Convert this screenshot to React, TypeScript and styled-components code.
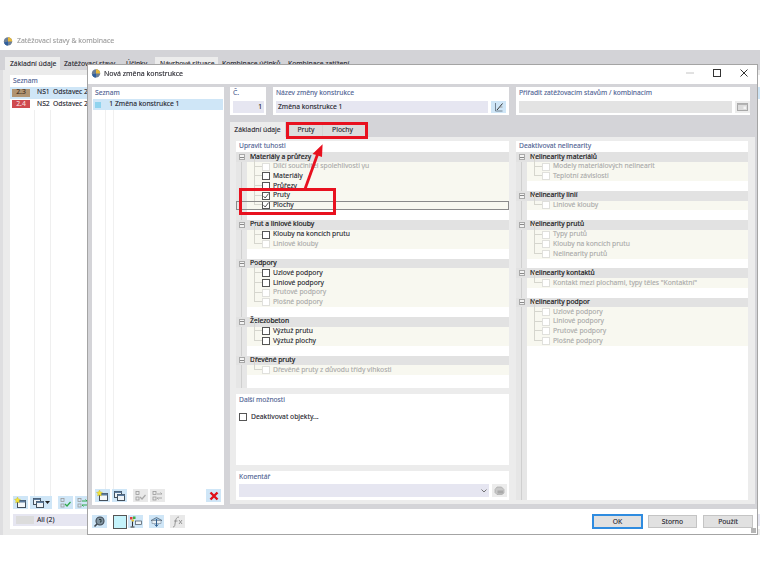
import React from "react";
import styled, { createGlobalStyle } from "styled-components";

const Global = createGlobalStyle`
  html, body { margin: 0; padding: 0; background: #fff; }
  body { width: 760px; height: 570px; overflow: hidden; font-family: "Noto Sans", "Open Sans", sans-serif; }
  * { box-sizing: border-box; }
`;

const Desktop = styled.div`
  position: relative;
  width: 760px;
  height: 570px;
  overflow: hidden;
  color: #24242c;
  font-size: 6.75px;
  line-height: 1;
  -webkit-text-stroke: 0.1px currentColor;
  filter: blur(0.3px);
`;

const BackWindow = styled.section`
  margin-top: 30px;
  padding-top: 30px;
  height: 505px;
  display: flex;
  flex-direction: column;
`;
const BackTitle = styled.header`
  position: absolute;
  top: 36px;
  left: 3px;
  display: flex;
  align-items: center;
  gap: 4px;
  color: #9a9a9a;
  font-size: 6.95px;
`;
const BackStrip = styled.nav`
  height: 20px;
  margin-top: -10px;
  padding: 7px 0 0 5px;
  background: #d3d3d7;
  display: flex;
`;
const BackTab = styled.div<{ $w: number; $light?: boolean }>`
  width: ${(p) => p.$w}px;
  height: 13px;
  padding: 4px 0 0 ${(p) => (p.$light ? 5 : 4)}px;
  white-space: nowrap;
  background: ${(p) => (p.$light ? "#ececec" : "transparent")};
`;
const BackBody = styled.div`
  flex: 1;
  display: flex;
  padding: 5px 0 6px 7px;
  border-left: 3px solid #dedee0;
  background: #ebebeb;
`;
const BackPanel = styled.div`
  flex: 1;
  background: #fff;
  display: flex;
  flex-direction: column;
  padding: 0 0 3px 0;
`;
const PanelTitle = styled.div<{ $tree?: boolean }>`
  color: #4d6192;
  font-size: 6.7px;
  height: 12px;
  padding: ${(p) => (p.$tree ? "1.5px" : "2.5px")} 0 0 3px;
  white-space: nowrap;
`;
const BackRow = styled.div<{ $selected?: boolean }>`
  height: 11.5px;
  display: flex;
  align-items: center;
  padding-left: 2px;
  background: ${(p) => (p.$selected ? "#cfe6f7" : "transparent")};
  white-space: nowrap;
`;
const Swatch = styled.span<{ $bg: string; $fg: string }>`
  width: 18px;
  height: 8px;
  margin-right: 7px;
  background: ${(p) => p.$bg};
  color: ${(p) => p.$fg};
  display: flex;
  align-items: center;
  justify-content: center;
`;
const BackCode = styled.span`
  width: 16px;
`;
const BackLines = styled.div`
  flex: 1;
  background:
    linear-gradient(#efefef, #efefef) 24px 0 / 1px 100% no-repeat,
    linear-gradient(#efefef, #efefef) 40px 0 / 1px 100% no-repeat;
`;
const Toolbar = styled.div`
  height: 13px;
  margin-left: 3px;
  display: flex;
  gap: 2px;
`;
const ToolGap = styled.span<{ $w: number }>`
  width: ${(p) => p.$w}px;
`;
const AllRow = styled.div`
  height: 12px;
  margin: 5px 0 0 3px;
  padding-left: 3px;
  background: #e6e6f1;
  display: flex;
  align-items: center;
  gap: 3px;
`;
const AllSwatch = styled.span`
  width: 18px;
  height: 8px;
  background: #dcdcdc;
`;

const IconBtn = styled.span<{ $off?: boolean; $w?: number }>`
  width: ${(p) => p.$w ?? 15}px;
  height: 13px;
  flex: none;
  display: flex;
  align-items: center;
  justify-content: center;
  background: ${(p) => (p.$off ? "#e9e9e9" : "#cfe6f7")};
`;

const Dialog = styled.section`
  position: absolute;
  left: 87px;
  top: 64px;
  width: 671px;
  height: 471px;
  border: 1px solid #a4a4a4;
  background: #fff;
  display: flex;
  flex-direction: column;
`;
const TitleBar = styled.header`
  height: 19px;
  flex: none;
  display: flex;
  align-items: center;
  padding: 0 0 3px 3px;
  gap: 3px;
  font-size: 7px;
`;
const WinControls = styled.div`
  margin-left: auto;
  display: flex;
  align-items: center;
  gap: 19px;
  padding-right: 9px;
`;
const Body = styled.div`
  height: 425px;
  flex: none;
  background: #d4d4d8;
  padding: 3px 0 0 4px;
  display: flex;
  gap: 6px;
`;
const Sidebar = styled.aside`
  width: 132px;
  margin-bottom: 4px;
  background: #fff;
  display: flex;
  flex-direction: column;
`;
const SideRow = styled.div`
  height: 11px;
  margin: 0 1px;
  background: #cfe6f7;
  display: flex;
  align-items: center;
  white-space: nowrap;
`;
const SideSwatch = styled.span`
  width: 6px;
  height: 6px;
  margin: 0 7px 0 2px;
  background: #8fd3ee;
`;
const SideNum = styled.span`
  width: 5px;
  margin-right: 2px;
  text-align: right;
`;
const SideLines = styled.div`
  flex: 1;
  background:
    linear-gradient(#f0f0f0, #f0f0f0) 13px 0 / 1px 100% no-repeat,
    linear-gradient(#f0f0f0, #f0f0f0) 21px 0 / 1px 100% no-repeat;
`;
const SideTools = styled.div`
  height: 13px;
  margin: 0 3px 3px;
  display: flex;
  gap: 2px;
`;
const Spacer = styled.span`
  flex: 1;
`;

const Main = styled.main`
  width: 525px;
  margin-bottom: 5px;
  display: flex;
  flex-direction: column;
`;
const HeaderRow = styled.div`
  height: 28px;
  flex: none;
  display: flex;
  gap: 7px;
`;
const HeadPanel = styled.div<{ $w: number }>`
  width: ${(p) => p.$w}px;
  background: #fff;
`;
const InputRow = styled.div<{ $tight?: boolean }>`
  display: flex;
  gap: 3px;
  padding: ${(p) => (p.$tight ? 1 : 2)}px 0 0 3px;
`;
const Input = styled.div<{ $w: number; $bg?: string; $right?: boolean; $h?: number }>`
  width: ${(p) => p.$w}px;
  height: ${(p) => p.$h ?? 12}px;
  background: ${(p) => p.$bg ?? "#e6e6f1"};
  padding: ${(p) => (p.$right ? "0 2px 0 0" : "0 0 0 2px")};
  display: flex;
  align-items: center;
  justify-content: ${(p) => (p.$right ? "flex-end" : "flex-start")};
  white-space: nowrap;
`;
const SmallBtn = styled.span<{ $off?: boolean; $h?: number }>`
  width: 15px;
  height: ${(p) => p.$h ?? 12}px;
  background: ${(p) => (p.$off ? "#ececec" : "#cfe6f7")};
  display: flex;
  align-items: center;
  justify-content: center;
`;
const TabStrip = styled.div`
  height: 15px;
  margin-top: 7px;
  flex: none;
  display: flex;
`;
const Tab = styled.div<{ $w: number; $active?: boolean; $ml?: number; $pr?: number }>`
  width: ${(p) => p.$w}px;
  margin-left: ${(p) => p.$ml ?? 0}px;
  padding: 1px ${(p) => p.$pr ?? 0}px 0 0;
  background: ${(p) => (p.$active ? "#ececec" : "#dcdcdc")};
  display: flex;
  align-items: center;
  justify-content: center;
  white-space: nowrap;
  & + & {
    border-left: ${(p) => (p.$ml ? "none" : "1px solid #d2d2d2")};
  }
`;
const TabContent = styled.div`
  flex: 1;
  background: #ececec;
  padding: 4px 7px 4px 6px;
  display: flex;
  gap: 7px;
`;
const Col = styled.div<{ $w: number }>`
  width: ${(p) => p.$w}px;
  display: flex;
  flex-direction: column;
  gap: 6px;
`;
const TreePanel = styled.div<{ $grow?: boolean; $h?: number }>`
  background: #fff;
  height: ${(p) => (p.$h ? `${p.$h}px` : "auto")};
  flex: ${(p) => (p.$grow ? 1 : "none")};
  display: flex;
  flex-direction: column;
`;
const TreeBody = styled.div`
  flex: 1;
  margin-top: -0.8px;
  background:
    linear-gradient(#cfcfcf, #cfcfcf) 5px 0 / 1px 100% no-repeat,
    linear-gradient(#e6e6e6, #e6e6e6) 0 0 / 11px 100% no-repeat;
  position: relative;
`;
const GroupBox = styled.div`
  padding-bottom: 9.7px;
`;
const GroupHead = styled.div`
  height: 9.7px;
  background: #e2e2e2;
  display: flex;
  align-items: center;
  white-space: nowrap;
  color: #1c1c22;
  -webkit-text-stroke: 0.2px currentColor;
`;
const Collapse = styled.span`
  width: 6px;
  height: 6px;
  margin: 0 5px 0 3px;
  border: 1px solid #a9a9a9;
  background: #f3f3f3;
  display: flex;
  align-items: center;
  justify-content: center;
  &::after {
    content: "";
    width: 4px;
    height: 1px;
    background: #888;
  }
`;
const Row = styled.div<{ $focus?: boolean }>`
  position: relative;
  height: 9.7px;
  margin-left: 11px;
  padding-left: 15px;
  background: #f8f8f0;
  display: flex;
  align-items: center;
  white-space: nowrap;
  &::before {
    content: "";
    position: absolute;
    left: 7px;
    bottom: 50%;
    width: 8px;
    height: 100%;
    border-left: 1px solid #d6d6ce;
    border-bottom: 1px solid #d6d6ce;
  }
  ${(p) =>
    p.$focus
      ? `&::after { content: ""; position: absolute; left: -11px; right: 0; top: 0; bottom: 0; border: 1px solid #8a8a8a; }`
      : ""}
`;
const Box = styled.span<{ $on?: boolean; $mr?: number }>`
  position: relative;
  width: 8px;
  height: 8px;
  margin-right: ${(p) => p.$mr ?? 3}px;
  flex: none;
  background: #fff;
  border: 1px solid ${(p) => (p.$on ? "#555" : "#e0e0dc")};
  display: flex;
  align-items: center;
  justify-content: center;
`;
const RowText = styled.span<{ $on?: boolean }>`
  color: ${(p) => (p.$on ? "#24242c" : "#a8a8a8")};
`;
const OptionRow = styled.div`
  height: 12px;
  margin-top: 5px;
  padding-left: 3px;
  display: flex;
  align-items: center;
`;
const SelectChevron = styled.span`
  margin-left: auto;
  display: flex;
  padding-right: 2px;
`;
const Footer = styled.footer`
  flex: 1;
  position: relative;
  padding: 0 4px;
  display: flex;
  align-items: center;
`;
const FootTools = styled.div`
  display: flex;
  align-items: center;
`;
const ColorBox = styled.span`
  width: 14px;
  height: 14px;
  margin: 0 1px 0 6px;
  background: #c5f3fb;
  border: 1px solid #555;
`;
const FootGap = styled.span`
  width: 6px;
`;
const Buttons = styled.div`
  margin-left: auto;
  display: flex;
  gap: 6px;
`;
const Btn = styled.button<{ $primary?: boolean; $w: number }>`
  width: ${(p) => p.$w}px;
  height: 13px;
  padding: 1px 0 0;
  font: inherit;
  color: inherit;
  background: #e1e1e1;
  border: ${(p) => (p.$primary ? "1px solid #2f8ce0" : "1px solid #c4c4c4")};
  outline: ${(p) => (p.$primary ? "0.5px solid #2f8ce0" : "none")};
`;
const Callout = styled.div<{ $x: number; $y: number; $w: number; $h: number }>`
  position: absolute;
  left: ${(p) => p.$x}px;
  top: ${(p) => p.$y}px;
  width: ${(p) => p.$w}px;
  height: ${(p) => p.$h}px;
  border: 3px solid #e8111f;
  pointer-events: none;
`;
const ArrowSvg = styled.svg`
  position: absolute;
  left: 296px;
  top: 140px;
  pointer-events: none;
`;
const GripGlyph = styled.span`
  position: absolute;
  right: 1px;
  bottom: 1px;
  width: 5px;
  height: 5px;
  background: radial-gradient(circle at 1px 1px, #b0b0b0 0.7px, transparent 0.8px) 0 0 / 2px 2px;
`;

const Rfem = () => (
  <svg width="10" height="10" viewBox="0 0 10 10">
    <circle cx="5" cy="5.4" r="4.2" fill="#6d7f96" />
    <path d="M5 1.2A4.2 4.2 0 0 1 9.2 5.4H5z" fill="#e7b93a" />
    <path d="M1 6.5A4.2 4.2 0 0 0 5 9.6V5.4z" fill="#2e5f9e" />
  </svg>
);
const WinGlyph = ({ star }: { star?: boolean }) => (
  <svg width="13" height="12" viewBox="0 0 13 12">
    <rect x="3.5" y="3.5" width="8" height="7" fill="#f4f8fb" stroke="#44505c" />
    <rect x="3.5" y="3.5" width="8" height="2" fill="#5c7da0" />
    {star ? <path d="M3.5 0l.9 2 2.1.4-1.6 1.4.5 2.2-1.9-1.100L1.600 6l.5-2.200L.5 2.400l2.100-.4z" fill="#f4e53a" stroke="#c8b21e" strokeWidth=".4" /> : null}
  </svg>
);
const CopyGlyph = () => (
  <svg width="13" height="12" viewBox="0 0 13 12">
    <rect x="1.500" y="1.500" width="7" height="6" fill="#eef3f7" stroke="#44505c" />
    <rect x="1.500" y="1.500" width="7" height="1.500" fill="#5c7da0" />
    <rect x="4.500" y="4.500" width="7" height="6" fill="#eef3f7" stroke="#44505c" />
    <rect x="4.500" y="4.500" width="7" height="1.500" fill="#5c7da0" />
  </svg>
);
const Caret = () => (
  <svg width="5" height="3" viewBox="0 0 5 3">
    <path d="M0 0h5L2.500 3z" fill="#222" />
  </svg>
);
const CheckList = ({ color = "#a8a8a8" }: { color?: string }) => (
  <svg width="13" height="12" viewBox="0 0 13 12" fill="none">
    <rect x="2" y="1.500" width="3" height="3" stroke="#9a9a9a" strokeWidth=".8" />
    <rect x="2" y="7" width="3" height="3" stroke="#9a9a9a" strokeWidth=".8" />
    <path d="M6 7l2 2 3.500-4" stroke={color} strokeWidth="1.200" />
  </svg>
);
const SwapList = ({ color = "#a8a8a8" }: { color?: string }) => (
  <svg width="13" height="12" viewBox="0 0 13 12" fill="none">
    <rect x="2" y="1.500" width="3" height="3" stroke="#9a9a9a" strokeWidth=".8" />
    <rect x="2" y="7" width="3" height="3" stroke="#9a9a9a" strokeWidth=".8" />
    <path d="M6 4h5M6 8h5M9.500 2.500L11 4M7.500 9.500L6 8" stroke={color} strokeWidth="1" />
  </svg>
);
const RedX = () => (
  <svg width="10" height="10" viewBox="0 0 10 10">
    <path d="M1.500 1.500l7 7M8.500 1.500l-7 7" stroke="#e01018" strokeWidth="2.400" />
  </svg>
);
const Tick = () => (
  <svg width="6" height="6" viewBox="0 0 6 6" fill="none">
    <path d="M.5 3.200l1.700 1.800L5.500.6" stroke="#444" strokeWidth=".9" />
  </svg>
);
const EditGlyph = () => (
  <svg width="12" height="10" viewBox="0 0 12 10" fill="none">
    <path d="M2.500 1v8h7" stroke="#5a6a78" strokeWidth=".8" />
    <path d="M4 8L9.500 1.500" stroke="#333" strokeWidth="1" />
    <path d="M6.500 5h3" stroke="#8a8a8a" strokeWidth=".8" />
  </svg>
);
const CardGlyph = () => (
  <svg width="11" height="8" viewBox="0 0 11 8">
    <rect x=".5" y=".5" width="10" height="7" fill="#dcdcdc" stroke="#a8a8a8" />
    <rect x=".5" y=".5" width="10" height="1.500" fill="#b4b4b4" />
    <rect x="6.500" y="3.500" width="2.500" height="2.500" fill="#f4f4f4" />
  </svg>
);
const StackGlyph = () => (
  <svg width="11" height="9" viewBox="0 0 11 9">
    <path d="M1 3.500L3 1h4.500l2.500 2.500V7l-2 1.500H3L1 6.500z" fill="#c8c8c8" stroke="#a0a0a0" strokeWidth=".6" />
    <path d="M3.500 4.500h5.500v3H3.500z" fill="#a9a9a9" />
  </svg>
);
const HelpGlyph = () => (
  <svg width="13" height="12" viewBox="0 0 13 12" fill="none">
    <circle cx="7" cy="5" r="4" fill="#7f929f" stroke="#3c4650" strokeWidth="1.100" />
    <path d="M4 8l-2.500 2.500" stroke="#3c4650" strokeWidth="1.600" />
    <path d="M6 3.500h2v2.500H7" stroke="#233" strokeWidth=".9" />
  </svg>
);
const TreeGlyph = () => (
  <svg width="13" height="12" viewBox="0 0 13 12">
    <rect x="1" y="1" width="2.500" height="2.500" fill="#e23a3a" />
    <rect x="4" y="0.500" width="2.500" height="2.500" fill="#3fae49" />
    <rect x="2.500" y="3.500" width="2.500" height="2" fill="#e8c72e" />
    <path d="M3.500 5.500v5M1.500 11h4" stroke="#333" strokeWidth="1" fill="none" />
    <rect x="6.500" y="5" width="6" height="3.500" fill="#f2f6fa" stroke="#44505c" strokeWidth=".7" />
  </svg>
);
const DiagramGlyph = () => (
  <svg width="13" height="12" viewBox="0 0 13 12" fill="none">
    <path d="M1 4.500L6.500 1.500 12 4.500z" fill="#9cc0dc" stroke="#4a5a68" strokeWidth=".7" />
    <path d="M2 4.500h9v3H2z" fill="#e8f0f6" stroke="#7a8a98" strokeWidth=".6" />
    <path d="M6.500 3v7M4.800 8.400L6.500 10.500 8.200 8.400" stroke="#2f5f90" strokeWidth="1" />
  </svg>
);
const FxGlyph = () => (
  <svg width="13" height="12" viewBox="0 0 13 12" fill="none" stroke="#8e8e8e" strokeWidth=".9">
    <path d="M2 11c2 0 1.800-2 2.300-5S5.500 1 8 1" />
    <path d="M3 5h3.500M8 4l3 4M11 4L8 8" />
  </svg>
);
const Chevron = () => (
  <svg width="6" height="4" viewBox="0 0 6 4" fill="none">
    <path d="M.5.500L3 3 5.500.500" stroke="#666" strokeWidth=".9" />
  </svg>
);
const MinGlyph = () => (
  <svg width="8" height="8" viewBox="0 0 8 8"><path d="M0 4h8" stroke="#c4c4c4" /></svg>
);
const MaxGlyph = () => (
  <svg width="8" height="8" viewBox="0 0 8 8" fill="none"><rect x=".5" y=".5" width="7" height="7" stroke="#333" /></svg>
);
const CloseGlyph = () => (
  <svg width="8" height="8" viewBox="0 0 8 8" fill="none"><path d="M.5.500l7 7M7.500.500l-7 7" stroke="#333" /></svg>
);

type Item = { t: string; on?: boolean; checked?: boolean; focus?: boolean };
type Group = { title: string; items: Item[] };

const leftGroups: Group[] = [
  {
    title: "Materiály a průřezy",
    items: [
      { t: "Dílčí součinitel spolehlivosti γu" },
      { t: "Materiály", on: true },
      { t: "Průřezy", on: true },
      { t: "Pruty", on: true, checked: true },
      { t: "Plochy", on: true, checked: true, focus: true },
    ],
  },
  { title: "Prut a liniové klouby", items: [{ t: "Klouby na koncích prutu", on: true }, { t: "Liniové klouby" }] },
  {
    title: "Podpory",
    items: [{ t: "Uzlové podpory", on: true }, { t: "Liniové podpory", on: true }, { t: "Prutové podpory" }, { t: "Plošné podpory" }],
  },
  { title: "Železobeton", items: [{ t: "Výztuž prutu", on: true }, { t: "Výztuž plochy", on: true }] },
  { title: "Dřevěné pruty", items: [{ t: "Dřevěné pruty z důvodu třídy vlhkosti" }] },
];
const rightGroups: Group[] = [
  { title: "Nelinearity materiálů", items: [{ t: "Modely materiálových nelinearit" }, { t: "Teplotní závislosti" }] },
  { title: "Nelinearity linií", items: [{ t: "Liniové klouby" }] },
  { title: "Nelinearity prutů", items: [{ t: "Typy prutů" }, { t: "Klouby na koncích prutu" }, { t: "Nelinearity prutů" }] },
  { title: "Nelinearity kontaktů", items: [{ t: 'Kontakt mezi plochami, typy těles "Kontaktní"' }] },
  { title: "Nelinearity podpor", items: [{ t: "Uzlové podpory" }, { t: "Liniové podpory" }, { t: "Prutové podpory" }, { t: "Plošné podpory" }] },
];

const Tree = ({ groups }: { groups: Group[] }) => (
  <TreeBody>
    {groups.map((g) => (
      <GroupBox key={g.title}>
        <GroupHead>
          <Collapse />
          {g.title}
        </GroupHead>
        {g.items.map((i) => (
          <Row key={i.t} $focus={i.focus}>
            <Box $on={i.on}>{i.checked ? <Tick /> : null}</Box>
            <RowText $on={i.on}>{i.t}</RowText>
          </Row>
        ))}
      </GroupBox>
    ))}
  </TreeBody>
);

const backTabs = [
  { t: "Základní údaje", w: 55, light: true },
  { t: "Zatěžovací stavy", w: 62 },
  { t: "Účinky", w: 33 },
  { t: "Návrhové situace", w: 63, light: true },
  { t: "Kombinace účinků", w: 66 },
  { t: "Kombinace zatížení", w: 70 },
];

export default function App() {
  return (
    <Desktop>
      <Global />
      <BackWindow>
        <BackTitle>
          <Rfem />
          Zatěžovací stavy &amp; kombinace
        </BackTitle>
        <BackStrip>
          {backTabs.map((t) => (
            <BackTab key={t.t} $w={t.w} $light={t.light}>
              {t.t}
            </BackTab>
          ))}
        </BackStrip>
        <BackBody>
          <BackPanel>
            <PanelTitle>Seznam</PanelTitle>
            <BackRow $selected>
              <Swatch $bg="#b09472" $fg="#3c2c1c">2.3</Swatch>
              <BackCode>NS1</BackCode>
              <span>Odstavec 2</span>
            </BackRow>
            <BackRow>
              <Swatch $bg="#cf4a4f" $fg="#f6dcdc">2.4</Swatch>
              <BackCode>NS2</BackCode>
              <span>Odstavec 2</span>
            </BackRow>
            <BackLines />
            <Toolbar>
              <IconBtn><WinGlyph star /></IconBtn>
              <IconBtn $w={22}><CopyGlyph /><Caret /></IconBtn>
              <ToolGap $w={2} />
              <IconBtn><CheckList color="#2fa84a" /></IconBtn>
              <IconBtn><SwapList color="#2fa84a" /></IconBtn>
            </Toolbar>
            <AllRow>
              <AllSwatch />
              All (2)
            </AllRow>
          </BackPanel>
        </BackBody>
      </BackWindow>

      <Dialog>
        <TitleBar>
          <Rfem />
          Nová změna konstrukce
          <WinControls>
            <MinGlyph />
            <MaxGlyph />
            <CloseGlyph />
          </WinControls>
        </TitleBar>
        <Body>
          <Sidebar>
            <PanelTitle>Seznam</PanelTitle>
            <SideRow>
              <SideSwatch />
              <SideNum>1</SideNum>
              Změna konstrukce 1
            </SideRow>
            <SideLines />
            <SideTools>
              <IconBtn><WinGlyph star /></IconBtn>
              <IconBtn><CopyGlyph /></IconBtn>
              <ToolGap $w={2} />
              <IconBtn $off><CheckList /></IconBtn>
              <IconBtn $off><SwapList /></IconBtn>
              <Spacer />
              <IconBtn><RedX /></IconBtn>
            </SideTools>
          </Sidebar>
          <Main>
            <HeaderRow>
              <HeadPanel $w={36}>
                <PanelTitle>Č.</PanelTitle>
                <InputRow>
                  <Input $w={31} $right>1</Input>
                </InputRow>
              </HeadPanel>
              <HeadPanel $w={236}>
                <PanelTitle>Název změny konstrukce</PanelTitle>
                <InputRow>
                  <Input $w={212}>Změna konstrukce 1</Input>
                  <SmallBtn><EditGlyph /></SmallBtn>
                </InputRow>
              </HeadPanel>
              <HeadPanel $w={234}>
                <PanelTitle>Přiřadit zatěžovacím stavům / kombinacím</PanelTitle>
                <InputRow>
                  <Input $w={213} $bg="#e3e3e3" />
                  <SmallBtn $off><CardGlyph /></SmallBtn>
                </InputRow>
              </HeadPanel>
            </HeaderRow>
            <TabStrip>
              <Tab $w={55} $active>Základní údaje</Tab>
              <Tab $w={33} $ml={4}>Pruty</Tab>
              <Tab $w={43} $pr={3}>Plochy</Tab>
            </TabStrip>
            <TabContent>
              <Col $w={273}>
                <TreePanel $h={247}>
                  <PanelTitle $tree>Upravit tuhosti</PanelTitle>
                  <Tree groups={leftGroups} />
                </TreePanel>
                <TreePanel $h={71}>
                  <PanelTitle>Další možnosti</PanelTitle>
                  <OptionRow>
                    <Box $on $mr={4} />
                    Deaktivovat objekty...
                  </OptionRow>
                </TreePanel>
                <TreePanel $grow>
                  <PanelTitle>Komentář</PanelTitle>
                  <InputRow $tight>
                    <Input $w={250} $h={13}>
                      <SelectChevron><Chevron /></SelectChevron>
                    </Input>
                    <SmallBtn $off $h={13}><StackGlyph /></SmallBtn>
                  </InputRow>
                </TreePanel>
              </Col>
              <Col $w={232}>
                <TreePanel $grow>
                  <PanelTitle $tree>Deaktivovat nelinearity</PanelTitle>
                  <Tree groups={rightGroups} />
                </TreePanel>
              </Col>
            </TabContent>
          </Main>
        </Body>
        <Footer>
          <FootTools>
            <IconBtn><HelpGlyph /></IconBtn>
            <ColorBox />
            <IconBtn><TreeGlyph /></IconBtn>
            <FootGap />
            <IconBtn><DiagramGlyph /></IconBtn>
            <FootGap />
            <IconBtn $off><FxGlyph /></IconBtn>
          </FootTools>
          <Buttons>
            <Btn $primary $w={49}>OK</Btn>
            <Btn $w={49}>Storno</Btn>
            <Btn $w={50}>Použít</Btn>
          </Buttons>
          <GripGlyph />
        </Footer>
      </Dialog>

      <Callout $x={286} $y={122} $w={82} $h={17} />
      <Callout $x={239} $y={188} $w={97} $h={27} />
      <ArrowSvg width="34" height="54" viewBox="0 0 34 54">
        <path d="M9 49L22 13" stroke="#e8111f" strokeWidth="2.800" fill="none" />
        <path d="M26.600 4.300L16.500 14l4 1 5.500 2z" fill="#e8111f" />
      </ArrowSvg>
    </Desktop>
  );
}
